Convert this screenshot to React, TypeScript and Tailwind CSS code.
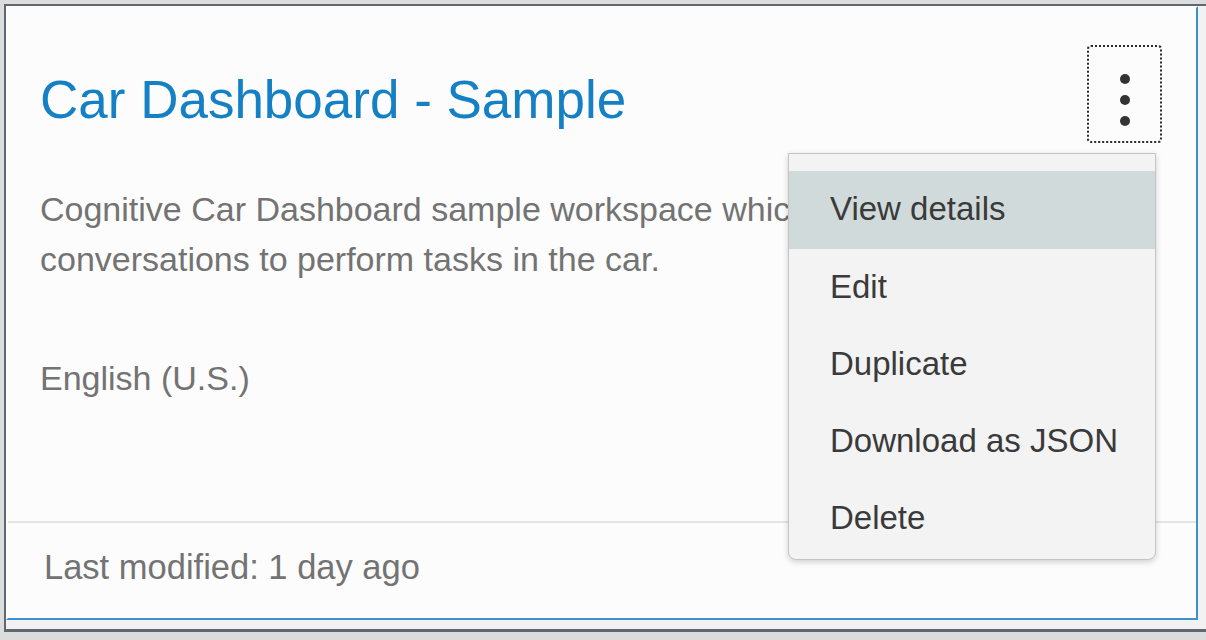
import React from "react";

const menuItems = ["View details", "Edit", "Duplicate", "Download as JSON", "Delete"];

export default function App() {
  return (
    <div className="w-[1206px] h-[640px] overflow-hidden bg-[#dcdcdc] pt-[4px] pl-[4px] font-['Liberation_Sans',Arial,sans-serif]">
      <div className="w-[1202px] h-[628px] border-l-2 border-t-2 border-b-[3px] border-[#5f6770] bg-[#f2f2f2]">
        <div className="relative w-[1192px] h-[614px] border-2 border-t-[#fcfcfc] border-l-[#fcfcfc] border-r-[#3a93d0] border-b-[#3a93d0] bg-[#fcfcfc] flex flex-col">
          {/* Header */}
          <div className="flex items-start justify-between pt-[37px] pl-[32px] pr-[34px]">
            <h1 className="mt-[23px] text-[53px] leading-[64px] text-[#1580c4] font-normal whitespace-nowrap">
              Car Dashboard - Sample
            </h1>
            <button className="w-[75px] h-[98px] border-2 border-dotted border-[#2a2a2a] rounded-[4px] flex items-center justify-center">
              <svg width="20" height="64" viewBox="0 0 20 64" className="mt-[12px]">
                <circle cx="10" cy="11" r="5" fill="#333" />
                <circle cx="10" cy="32" r="5" fill="#333" />
                <circle cx="10" cy="53" r="5" fill="#333" />
              </svg>
            </button>
          </div>

          {/* Description */}
          <div className="mt-[41px] pl-[32px] text-[34px] leading-[50px] text-[#737373]">
            <div className="w-[748px] overflow-hidden whitespace-nowrap">Cognitive Car Dashboard sample workspace which allows you to have</div>
            <div className="whitespace-nowrap">conversations to perform tasks in the car.</div>
          </div>

          <div className="mt-[69px] pl-[32px] text-[34px] leading-[50px] text-[#737373]">English (U.S.)</div>

          {/* Footer */}
          <div className="mt-auto">
            <div className="h-[2px] bg-[#e4e4e4]" />
            <div className="pt-[19px] pb-[26px] pl-[36px] text-[34.5px] leading-[50px] text-[#737373]">
              Last modified: 1 day ago
            </div>
          </div>

          {/* Overflow menu */}
          <div className="absolute left-[780px] top-[145px] w-[368px] border border-[#c4c4c4] rounded-b-[8px] bg-[#f3f3f3] pt-[17px] pb-[2px] shadow-[0_2px_6px_rgba(0,0,0,0.18)]">
            {menuItems.map((item, i) => (
              <div
                key={item}
                className={
                  i === 0
                    ? "h-[78px] pl-[41px] flex items-center text-[33px] text-[#3a3a3a] bg-[#d1dadb] whitespace-nowrap"
                    : "h-[77px] pl-[41px] flex items-center text-[33px] text-[#3a3a3a] whitespace-nowrap"
                }
              >
                <span className="leading-[40px] mb-[2px]">{item}</span>
              </div>
            ))}
          </div>
        </div>
      </div>
    </div>
  );
}
